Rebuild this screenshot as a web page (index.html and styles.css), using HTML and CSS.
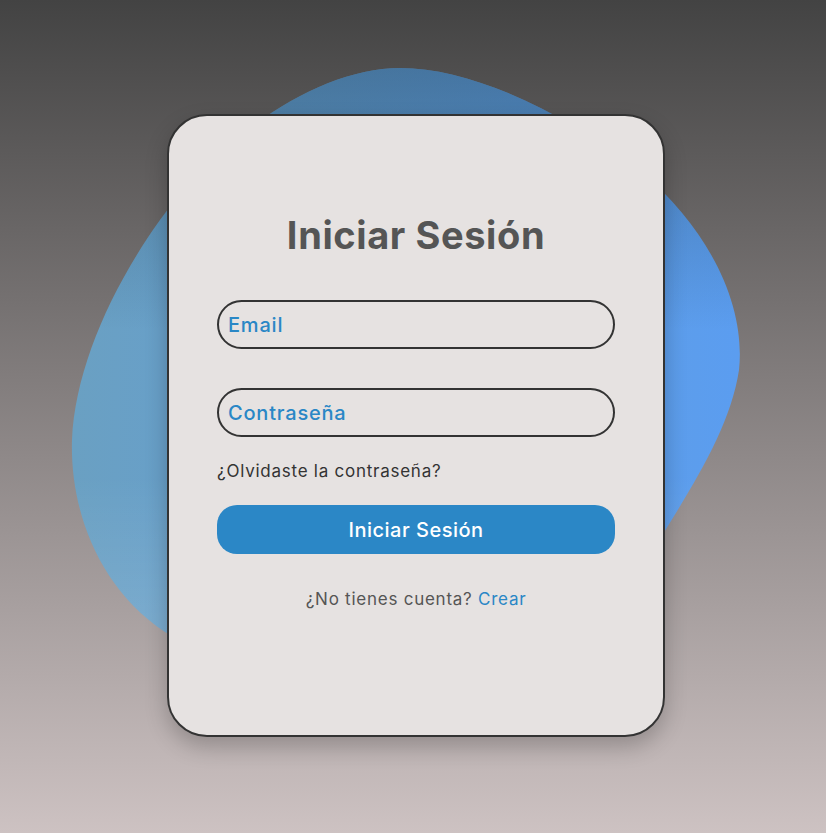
FILE: index.html
```html
<!DOCTYPE html>
<html lang="es">
<head>
<meta charset="utf-8">
<title>Iniciar Sesión</title>
<link rel="stylesheet" href="styles.css">
</head>
<body>
<svg class="blob" viewBox="0 0 826 833" width="826" height="833" aria-hidden="true">
  <defs>
    <linearGradient id="base" x1="72" y1="0" x2="740" y2="0" gradientUnits="userSpaceOnUse">
      <stop offset="0" stop-color="#6aa0c2"/>
      <stop offset="1" stop-color="#5b9df0"/>
    </linearGradient>
    <linearGradient id="shade" x1="0" y1="68" x2="0" y2="650" gradientUnits="userSpaceOnUse">
      <stop offset="0" stop-color="#1e3c50" stop-opacity="0.42"/>
      <stop offset="0.45" stop-color="#1e3c50" stop-opacity="0"/>
      <stop offset="0.7" stop-color="#ffffff" stop-opacity="0"/>
      <stop offset="1" stop-color="#ffffff" stop-opacity="0.14"/>
    </linearGradient>
  </defs>
  <path d="M 400 68 C 470 68 560 110 640 170 C 720 240 745 315 739 370 C 730 430 690 490 650 555 L 600 660 C 400 700 250 680 165 632 C 95 585 70 505 72 440 C 75 370 110 290 160 220 C 220 135 320 68 400 68 Z" fill="url(#base)"/>
  <path d="M 400 68 C 470 68 560 110 640 170 C 720 240 745 315 739 370 C 730 430 690 490 650 555 L 600 660 C 400 700 250 680 165 632 C 95 585 70 505 72 440 C 75 370 110 290 160 220 C 220 135 320 68 400 68 Z" fill="url(#shade)"/>
</svg>
<main class="card">
  <h1 class="title">Iniciar Sesión</h1>
  <form class="form">
    <input class="field" type="email" placeholder="Email">
    <input class="field field-gap" type="password" placeholder="Contraseña">
    <a class="forgot" href="#">¿Olvidaste la contraseña?</a>
    <button class="btn" type="button">Iniciar Sesión</button>
  </form>
  <p class="signup">¿No tienes cuenta? <a href="#">Crear</a></p>
</main>
</body>
</html>
```

FILE: styles.css
```css
* { box-sizing: border-box; }
html, body { margin: 0; height: 100%; }
body {
  min-height: 833px;
  background: linear-gradient(to bottom, #434343 0%, #cdc2c2 100%);
  font-family: Inter, "Noto Sans", sans-serif;
  display: flex;
  justify-content: center;
  align-items: flex-start;
  padding: 114px 0 0 6px;
  position: relative;
  overflow: hidden;
}
.blob {
  position: absolute;
  left: 0;
  top: 0;
}
.card {
  position: relative;
  width: 498px;
  height: 623px;
  background: #e6e2e1;
  border: 2px solid #333;
  border-radius: 40px;
  box-shadow: 0 10px 22px rgba(0, 0, 0, 0.22);
  padding: 96px 48px 0;
  display: flex;
  flex-direction: column;
}
.title {
  margin: 0;
  font-size: 38px;
  line-height: 46px;
  font-weight: 700;
  color: #555;
  text-align: center;
  letter-spacing: 0.6px;
}
.form {
  display: flex;
  flex-direction: column;
  margin-top: 42px;
}
.field {
  height: 49px;
  width: 100%;
  border: 2px solid #333;
  border-radius: 25px;
  background: transparent;
  padding: 0 9px;
  font-family: inherit;
  font-size: 20px;
  font-weight: 500;
  letter-spacing: 0.8px;
  color: #2a87c6;
  outline: none;
}
.field::placeholder { color: #2a87c6; opacity: 1; }
.field-gap { margin-top: 39px; }
.forgot {
  margin-top: 22px;
  font-size: 17px;
  line-height: 24px;
  letter-spacing: 0.75px;
  color: #333;
  text-decoration: none;
}
.btn {
  margin-top: 22px;
  height: 49px;
  width: 100%;
  border: none;
  border-radius: 20px;
  background: #2b87c6;
  color: #fff;
  font-family: inherit;
  font-size: 20px;
  font-weight: 500;
  letter-spacing: 0.5px;
}
.signup {
  margin: 33px 0 0;
  text-align: center;
  font-size: 17px;
  line-height: 24px;
  letter-spacing: 0.75px;
  color: #555;
}
.signup a { color: #2a87c6; text-decoration: none; }
```
